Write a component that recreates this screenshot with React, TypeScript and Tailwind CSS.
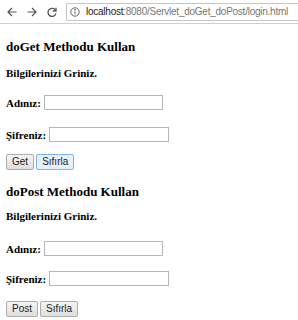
import React from "react";

const serif = { fontFamily: '"Liberation Serif", "Times New Roman", serif' };
const sans = { fontFamily: '"Liberation Sans", Arial, sans-serif' };

function Btn({ label, focused }: { label: string; focused?: boolean }) {
  return (
    <button
      style={sans}
      className={
        focused
          ? "h-[16px] px-[5px] text-[10px] leading-none text-[#222] border border-[#7eb4ea] bg-[#e5f1fb] rounded-[2px]"
          : "h-[16px] px-[5px] text-[10px] leading-none text-[#222] border border-[#adadad] bg-gradient-to-b from-[#f5f5f5] to-[#dedede] rounded-[2px]"
      }
    >
      {label}
    </button>
  );
}

function Form({ title, btn, focusReset, gaps }: { title: string; btn: string; focusReset?: boolean; gaps: number[] }) {
  return (
    <div className="flex flex-col" style={serif}>
      <h3 className="text-[13px] leading-[16px] font-bold text-black" style={{ marginTop: gaps[0] }}>{title}</h3>
      <p className="text-[11px] leading-[14px] font-bold text-black" style={{ marginTop: gaps[1] }}>Bilgilerinizi Griniz.</p>
      <div className="flex items-center gap-[3px]" style={{ marginTop: gaps[2] }}>
        <span className="text-[11px] leading-[14px] font-bold">Adınız:</span>
        <div className="h-[15px] w-[119px] border border-[#b5b5b5] bg-white" />
      </div>
      <div className="flex items-center gap-[3px]" style={{ marginTop: gaps[3] }}>
        <span className="text-[11px] leading-[14px] font-bold">Şifreniz:</span>
        <div className="h-[15px] w-[120px] border border-[#b5b5b5] bg-white" />
      </div>
      <div className="flex gap-[2px]" style={{ marginTop: gaps[4] }}>
        <Btn label={btn} />
        <Btn label="Sıfırla" focused={focusReset} />
      </div>
    </div>
  );
}

export default function App() {
  return (
    <div className="w-[298px] h-[320px] bg-white overflow-hidden">
      <div className="h-[24px] flex items-center border-b border-[#d0d0d0] bg-white">
        <svg width="10" height="10" viewBox="0 0 10 10" className="ml-[7px] shrink-0" fill="none" stroke="#555" strokeWidth="1.2">
          <path d="M9.5 5H1M5 1L1 5L5 9" />
        </svg>
        <svg width="10" height="10" viewBox="0 0 10 10" className="ml-[10px] shrink-0" fill="none" stroke="#555" strokeWidth="1.2">
          <path d="M0.5 5H9M5 1L9 5L5 9" />
        </svg>
        <svg width="10" height="10" viewBox="0 0 10 10" className="ml-[10px] shrink-0" fill="none" stroke="#555" strokeWidth="1.3">
          <path d="M8.6 3.6A4 4 0 1 0 8.9 6.4" />
          <path d="M9 0.8v3.2h-3.2" />
        </svg>
        <div className="ml-[9px] h-[18px] flex-1 min-w-0 overflow-hidden border border-[#c8c8c8] border-r-0 rounded-l-[2px] flex items-center pl-[3px]">
          <svg width="10" height="10" viewBox="0 0 10 10" fill="none" stroke="#555" strokeWidth="0.9" className="shrink-0">
            <circle cx="5" cy="5" r="4.2" />
            <path d="M5 4.3v3" />
            <circle cx="5" cy="2.8" r="0.4" fill="#555" />
          </svg>
          <span className="ml-[6px] text-[10px] tracking-[-0.25px] leading-none whitespace-nowrap" style={sans}>
            <span className="text-[#222]">localhost</span>
            <span className="text-[#777]">:8080/Servlet_doGet_doPost/login.html</span>
          </span>
        </div>
      </div>
      <div className="px-[6px]">
        <Form title="doGet Methodu Kullan" btn="Get" focusReset gaps={[15, 11, 15, 17, 12]} />
        <Form title="doPost Methodu Kullan" btn="Post" gaps={[14, 9, 18, 15, 15]} />
      </div>
    </div>
  );
}
